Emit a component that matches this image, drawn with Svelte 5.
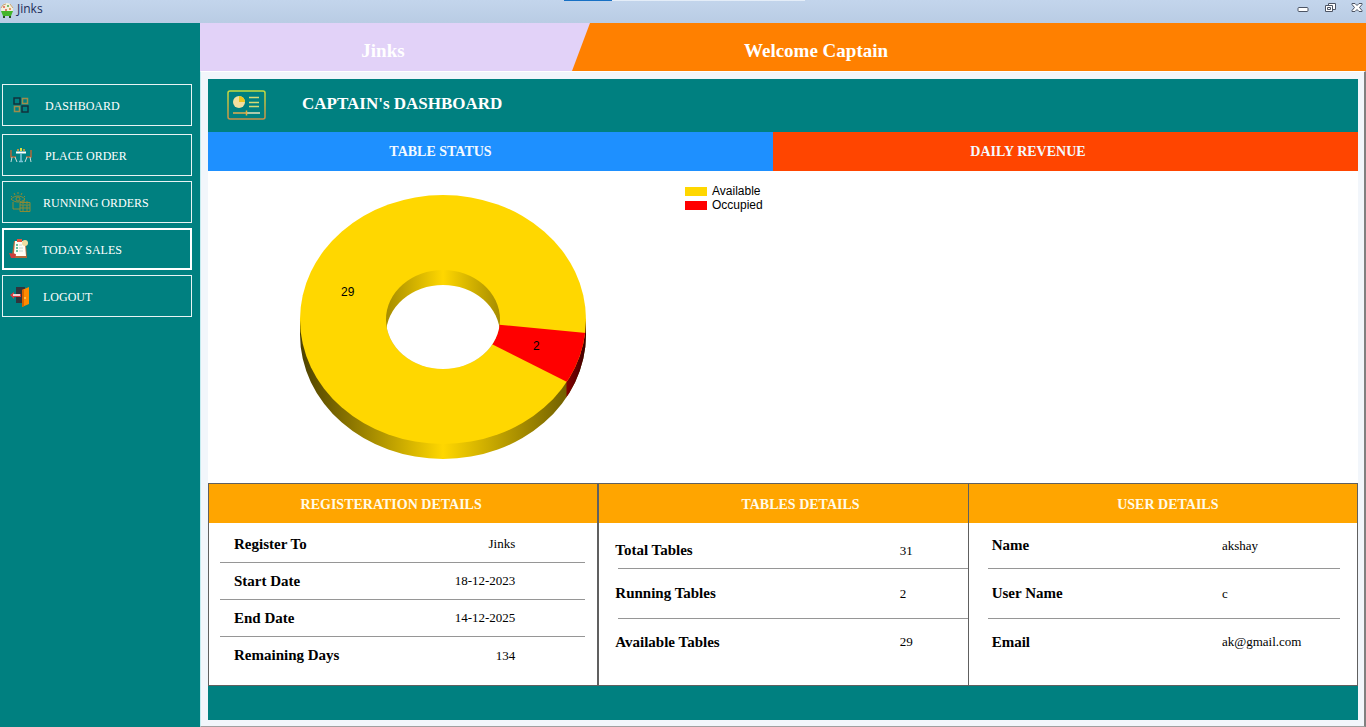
<script lang="ts">
  type Row = { label: string; value: string };
  type Card = { id: string; title: string; rows: Row[] };

  let active = $state("TODAY SALES");

  const menu = ["DASHBOARD", "PLACE ORDER", "RUNNING ORDERS", "TODAY SALES", "LOGOUT"];

  const cards: Card[] = [
    {
      id: "registration",
      title: "REGISTERATION DETAILS",
      rows: [
        { label: "Register To", value: "Jinks" },
        { label: "Start Date", value: "18-12-2023" },
        { label: "End Date", value: "14-12-2025" },
        { label: "Remaining Days", value: "134" },
      ],
    },
    {
      id: "tables",
      title: "TABLES DETAILS",
      rows: [
        { label: "Total Tables", value: "31" },
        { label: "Running Tables", value: "2" },
        { label: "Available Tables", value: "29" },
      ],
    },
    {
      id: "user",
      title: "USER DETAILS",
      rows: [
        { label: "Name", value: "akshay" },
        { label: "User Name", value: "c" },
        { label: "Email", value: "ak@gmail.com" },
      ],
    },
  ];
</script>

{#snippet menuIcon(name: string)}
  <svg class="menu-icon" width="24" height="24" viewBox="0 0 24 24" fill="none">
    {#if name === "DASHBOARD"}
      <g stroke-width="1.5">
        <path d="M5 5h6v6H5zM13 13h6v6h-6z" stroke="#12303c" />
        <path d="M13.5 5.500h5v5h-5zM5.500 13.500h5v5h-5z" stroke="#9c8c4c" />
      </g>
    {:else if name === "PLACE ORDER"}
      <path d="M2 7v7h5M22 7v7h-5" stroke="#b0683a" stroke-width="1.500" />
      <path d="M3 14l-1 5M6 14l2 5M21 14l1 5M18 14l-2 5" stroke="#c8dcd8" />
      <path d="M7 9.500h10" stroke="#fff" stroke-width="2" />
      <path d="M12 10v8M10 18.500h4" stroke="#7cc4d8" stroke-width="1.500" />
      <path d="M9 8V6M15 8V6" stroke="#e8a030" stroke-width="1.500" />
      <path d="M12 8V5" stroke="#d8e040" stroke-width="2" />
    {:else if name === "RUNNING ORDERS"}
      <g stroke="#8c8a34">
        <path d="M2 6l1 1M5 3l1 2M9 2v2M13 3l-1 2M16 6l-1 1" />
        <path d="M2 9c4-4 10-4 14 0c-4 4-10 4-14 0z" />
        <circle cx="9" cy="9" r="2" />
        <path d="M4 12v7h7M15 10v2M11 12.500h10v9H11zM11 15h10M14 15v6M18 15v6M11 18h10M14 11v3M18 11v3" />
      </g>
    {:else if name === "TODAY SALES"}
      <path d="M6 4h11l1 4 1 13H7L4 18z" fill="#b86838" />
      <path d="M7 4h8l2 3 1 12H8L6 16z" fill="#fffdf4" />
      <path d="M9 2h5v3H9z" fill="#e45440" />
      <circle cx="17" cy="6" r="3" fill="#f0dda0" />
      <path d="M8 8h2M8 11h2M8 14h2" stroke="#35ae80" stroke-width="1.500" />
      <path d="M11 8h3M11 11h4M11 14h4" stroke="#c7d7cf" />
      <path d="M1 16l7 1-1 4H3z" fill="#cf3e3d" />
    {:else}
      <path d="M7 3h9v16H7z" fill="#30343c" />
      <path d="M13 6l7-3v17l-7 3z" fill="#ff8a00" />
      <path d="M13 6v17l2-1V5z" fill="#d86500" />
      <path d="M1 11l4-3v2h7v3H5v2z" fill="#d93b40" />
      <path d="M4 11h7" stroke="#fff" stroke-width="1.500" />
      <circle cx="16" cy="14" r="1" fill="#ffd060" />
    {/if}
  </svg>
{/snippet}

<div class="window">
  <header class="titlebar">
    <svg width="14" height="15" viewBox="0 0 14 15">
      <circle cx="7" cy="6" r="6" fill="#f3f0dc" />
      <path d="M1 5l2-3 3-1M10 1l3 4" stroke="#c6a478" fill="none" />
      <circle cx="4" cy="4" r="1" fill="#e35b45" />
      <circle cx="8" cy="3" r="1" fill="#4faa47" />
      <circle cx="10" cy="6" r="1" fill="#e67a36" />
      <circle cx="6" cy="7" r="1" fill="#d65852" />
      <path d="M1 8h12l-2 5H3z" fill="#43b52b" />
      <path d="M3 13h2v2H3zM9 13h2v2H9z" fill="#284f26" />
    </svg>
    <span class="app-name">Jinks</span>
    <div class="loader"><i></i></div>
    <div class="controls">
      <button aria-label="Minimize">
        <svg width="12" height="12" viewBox="0 0 12 12">
          <rect x="1" y="5.500" width="10" height="4" rx="1" fill="#fff" stroke="#4c5464" />
        </svg>
      </button>
      <button aria-label="Restore">
        <svg width="12" height="12" viewBox="0 0 12 12" fill="#fff" stroke="#4c5464">
          <path d="M4.500 1.500h7v6h-7z" />
          <path d="M1.500 3.500h7v6h-7z" />
          <path d="M3.500 5.500h3v2h-3z" />
        </svg>
      </button>
      <button aria-label="Close">
        <svg width="12" height="12" viewBox="0 0 12 12">
          <path
            d="M1 1.500h3l2 2 2-2h3v1L8.500 5.500l2.500 3v1H8l-2-2-2 2H1v-1l2.500-3L1 2.500z"
            fill="#fff"
            stroke="#4c5464"
          />
        </svg>
      </button>
    </div>
  </header>

  <div class="body">
    <nav class="sidebar">
      {#each menu as item}
        <button class="menu-item" class:active={active === item} onclick={() => (active = item)}>
          {@render menuIcon(item)}
          <span>{item}</span>
        </button>
      {/each}
    </nav>

    <div class="content">
      <div class="banner">
        <div class="brand">Jinks</div>
        <div class="welcome">Welcome Captain</div>
      </div>

      <main class="frame">
        <div class="heading">
          <svg width="40" height="31" viewBox="0 0 40 31" fill="none">
            <defs>
              <linearGradient id="card-line" x1="0" y1="0" x2="0" y2="1">
                <stop offset="0" stop-color="#c4dc40" />
                <stop offset="1" stop-color="#c89048" />
              </linearGradient>
            </defs>
            <rect x="1" y="1" width="37" height="28" rx="2" stroke="url(#card-line)" stroke-width="1.500" />
            <circle cx="12" cy="12" r="6" fill="#f2dfa0" />
            <path d="M12 12V6a6 6 0 0 1 6 6z" fill="#edc51c" />
            <path d="M22 7.500h10M22 12.500h10M22 16.500h10" stroke="#d5da75" stroke-width="1.500" />
            <path d="M6 23h14" stroke="#e2ae50" stroke-width="1.500" />
            <path d="M20 23h13" stroke="#e4e2bc" stroke-width="1.500" />
            <path d="M19.500 20.500v5" stroke="#e8ae3c" stroke-width="1.500" />
          </svg>
          <h1>CAPTAIN's DASHBOARD</h1>
        </div>

        <div class="tabs">
          <h2 class="status">TABLE STATUS</h2>
          <h2 class="revenue">DAILY REVENUE</h2>
        </div>

        <section class="charts">
          <svg class="pie" width="430" height="312" viewBox="0 0 430 312" role="img" aria-label="Table status">
            <defs>
              <linearGradient id="outer-wall" gradientUnits="userSpaceOnUse" x1="92" y1="0" x2="378" y2="0">
                <stop offset="0" stop-color="#4c4000" />
                <stop offset="0.500" stop-color="#ffd700" />
                <stop offset="1" stop-color="#5c4e00" />
              </linearGradient>
              <linearGradient id="inner-wall" gradientUnits="userSpaceOnUse" x1="178" y1="0" x2="292" y2="0">
                <stop offset="0" stop-color="#a68c00" />
                <stop offset="0.500" stop-color="#ffd700" />
                <stop offset="1" stop-color="#a68c00" />
              </linearGradient>
              <linearGradient id="red-wall" gradientUnits="userSpaceOnUse" x1="358" y1="0" x2="378" y2="0">
                <stop offset="0" stop-color="#880000" />
                <stop offset="1" stop-color="#3c0000" />
              </linearGradient>
              <clipPath id="wall-shape">
                <path d="M92 148.500v15A143 124.500 0 0 0 378 163.500v-15z" />
              </clipPath>
              <clipPath id="top-shape">
                <ellipse cx="235" cy="148.500" rx="143" ry="124.500" />
              </clipPath>
              <clipPath id="hole-shape">
                <ellipse cx="235" cy="148.500" rx="57" ry="49.500" />
              </clipPath>
            </defs>
            <!-- side walls -->
            <path d="M92 148.500v15A143 124.500 0 0 0 378 163.500v-15z" fill="url(#outer-wall)" />
            <path d="M358.500 148h22v90h-22z" fill="url(#red-wall)" clip-path="url(#wall-shape)" />
            <!-- top faces -->
            <ellipse cx="235" cy="148.500" rx="143" ry="124.500" fill="#ffd700" />
            <path
              d="M235 148.500L406 164.500L406 234.500z"
              fill="#f00"
              clip-path="url(#top-shape)"
            />
            <!-- hole -->
            <ellipse cx="235" cy="148.500" rx="57" ry="49.500" fill="url(#inner-wall)" />
            <ellipse cx="235" cy="163.500" rx="57" ry="49.500" fill="#fff" clip-path="url(#hole-shape)" />
            <text x="133" y="125">29</text>
            <text x="325" y="179">2</text>
          </svg>
          <ul class="legend">
            <li><i class="available"></i>Available</li>
            <li><i class="occupied"></i>Occupied</li>
          </ul>
        </section>

        <section class="cards">
          {#each cards as card}
            <article class="card {card.id}">
              <h3>{card.title}</h3>
              <dl>
                {#each card.rows as row}
                  <div class="row">
                    <dt>{row.label}</dt>
                    <dd>{row.value}</dd>
                  </div>
                {/each}
              </dl>
            </article>
          {/each}
        </section>

        <footer></footer>
      </main>
    </div>
  </div>
</div>

<style>
  :global(body) {
    margin: 0;
  }

  .window {
    min-height: 100vh;
    display: flex;
    flex-direction: column;
    font-family: "Liberation Serif", serif;
    background: #008080;
  }

  .window :is(h1, h2, h3, dl, dd, ul) {
    margin: 0;
    padding: 0;
  }

  button {
    border: 0;
    padding: 0;
    background: none;
    font: inherit;
    cursor: pointer;
  }

  .titlebar {
    display: grid;
    grid-template-columns: 17px 49fr auto 50fr;
    height: 23px;
    box-sizing: border-box;
    padding-right: 3px;
    background: linear-gradient(#c3d5ec, #b9cce4);
  }

  .titlebar > svg {
    margin-top: 3px;
  }

  .app-name {
    font: 12px/18px "Open Sans", sans-serif;
    color: #1c2c58;
  }

  .loader {
    width: 241px;
    height: 1px;
    background: #e4edf8;
  }

  .loader i {
    display: block;
    width: 48px;
    height: 1px;
    background: #1770c4;
  }

  .controls {
    display: flex;
    justify-content: flex-end;
    align-items: flex-start;
    gap: 15px;
  }

  .controls button {
    height: 12px;
    margin-top: 2px;
  }

  .controls svg {
    display: block;
  }

  .body {
    flex: 1;
    display: flex;
  }

  .sidebar {
    width: 200px;
    box-sizing: border-box;
    padding: 61px 8px 0 2px;
    display: flex;
    flex-direction: column;
    gap: 5px;
  }

  .menu-item {
    display: flex;
    align-items: center;
    gap: 10px;
    height: 42px;
    padding-left: 6px;
    border: 1px solid #e8f4f4;
    color: #fff;
    font-size: 12px;
  }

  .menu-item span {
    padding-top: 2px;
  }

  .menu-item:nth-child(-n + 2) {
    gap: 12px;
  }

  .menu-item:first-child {
    margin-bottom: 3px;
  }

  .menu-item.active {
    border: 2px solid #fff;
    padding-left: 4px;
  }

  .content {
    flex: 1;
    display: flex;
    flex-direction: column;
  }

  .banner {
    display: flex;
    height: 48px;
    line-height: 56px;
    background: #ff8000;
    color: #fff;
    font-size: 19px;
    font-weight: bold;
  }

  .brand {
    width: 390px;
    box-sizing: border-box;
    padding-right: 24px;
    text-align: center;
    background: #e2d2f8;
    clip-path: polygon(0 0, 100% 0, 372px 100%, 0 100%);
  }

  .welcome {
    margin-left: 154px;
  }

  .frame {
    flex: 1;
    display: flex;
    flex-direction: column;
    padding: 7px 6px 6px 7px;
    border: 1px solid #fff;
    border-left-color: #c4ecf0;
    border-right: 2px solid #808080;
    border-bottom-color: #a0a0a0;
    background: #f2f6fb;
  }

  .heading {
    display: flex;
    align-items: center;
    gap: 35px;
    height: 53px;
    padding-left: 19px;
    background: #008080;
    color: #fff;
  }

  .heading h1 {
    font-size: 17px;
    line-height: 20px;
    margin-bottom: 4px;
  }

  .tabs {
    display: grid;
    grid-template-columns: 565fr 585fr;
    line-height: 39px;
    text-align: center;
    color: #f4faff;
  }

  h2,
  h3 {
    font-size: 14px;
  }

  .tabs .status {
    padding-right: 100px;
    background: #1e90ff;
  }

  .tabs .revenue {
    padding-right: 75px;
    background: #ff4500;
  }

  .charts {
    flex: 1;
    display: flex;
    background: #fff;
    font: 12px/14px "Liberation Sans", sans-serif;
  }

  .charts .legend {
    list-style: none;
    margin: 13px 0 0 47px;
  }

  .legend li {
    display: flex;
    align-items: center;
    gap: 5px;
  }

  .legend i {
    width: 22px;
    height: 9px;
  }

  .available {
    background: #ffd700;
  }

  .occupied {
    background: #f00;
  }

  .cards {
    display: flex;
    height: 203px;
    background: #fff;
  }

  .card {
    flex: 390 1 0;
    box-sizing: border-box;
    border: 1px solid #606060;
  }

  .card h3 {
    line-height: 41px;
    height: 39px;
    text-align: center;
    background: #ffa500;
    color: #fffbe8;
  }

  .row {
    display: grid;
    align-items: center;
    border-bottom: 1px solid #969696;
    font-size: 13px;
    box-sizing: border-box;
  }

  .row:last-child {
    border-bottom: 0;
  }

  dt {
    font-size: 15px;
    font-weight: bold;
  }

  .registration h3 {
    padding-right: 24px;
  }

  .registration dl {
    padding: 3px 12px 0 11px;
    display: grid;
    grid-auto-rows: 37px;
  }

  .registration .row {
    grid-template-columns: 1fr auto;
    padding: 0 70px 0 14px;
  }

  .card.tables {
    flex-grow: 370;
    border-right: 0;
  }

  .tables h3 {
    padding-left: 34px;
  }

  .tables dl,
  .user dl {
    display: grid;
    grid-template-rows: 46px 50px 46px;
  }

  .tables dl {
    grid-template-rows: 36px 50px 46px;
    padding: 10px 0 0 19px;
  }

  .tables .row {
    grid-template-columns: 1fr 68px;
  }

  .tables dt {
    margin-left: -3px;
  }

  .user h3 {
    padding-left: 10px;
  }

  .user dl {
    padding: 0 17px 0 19px;
  }

  .user .row {
    grid-template-columns: 1fr 118px;
    padding-left: 4px;
  }

  footer {
    height: 34px;
    background: #008080;
  }
</style>
